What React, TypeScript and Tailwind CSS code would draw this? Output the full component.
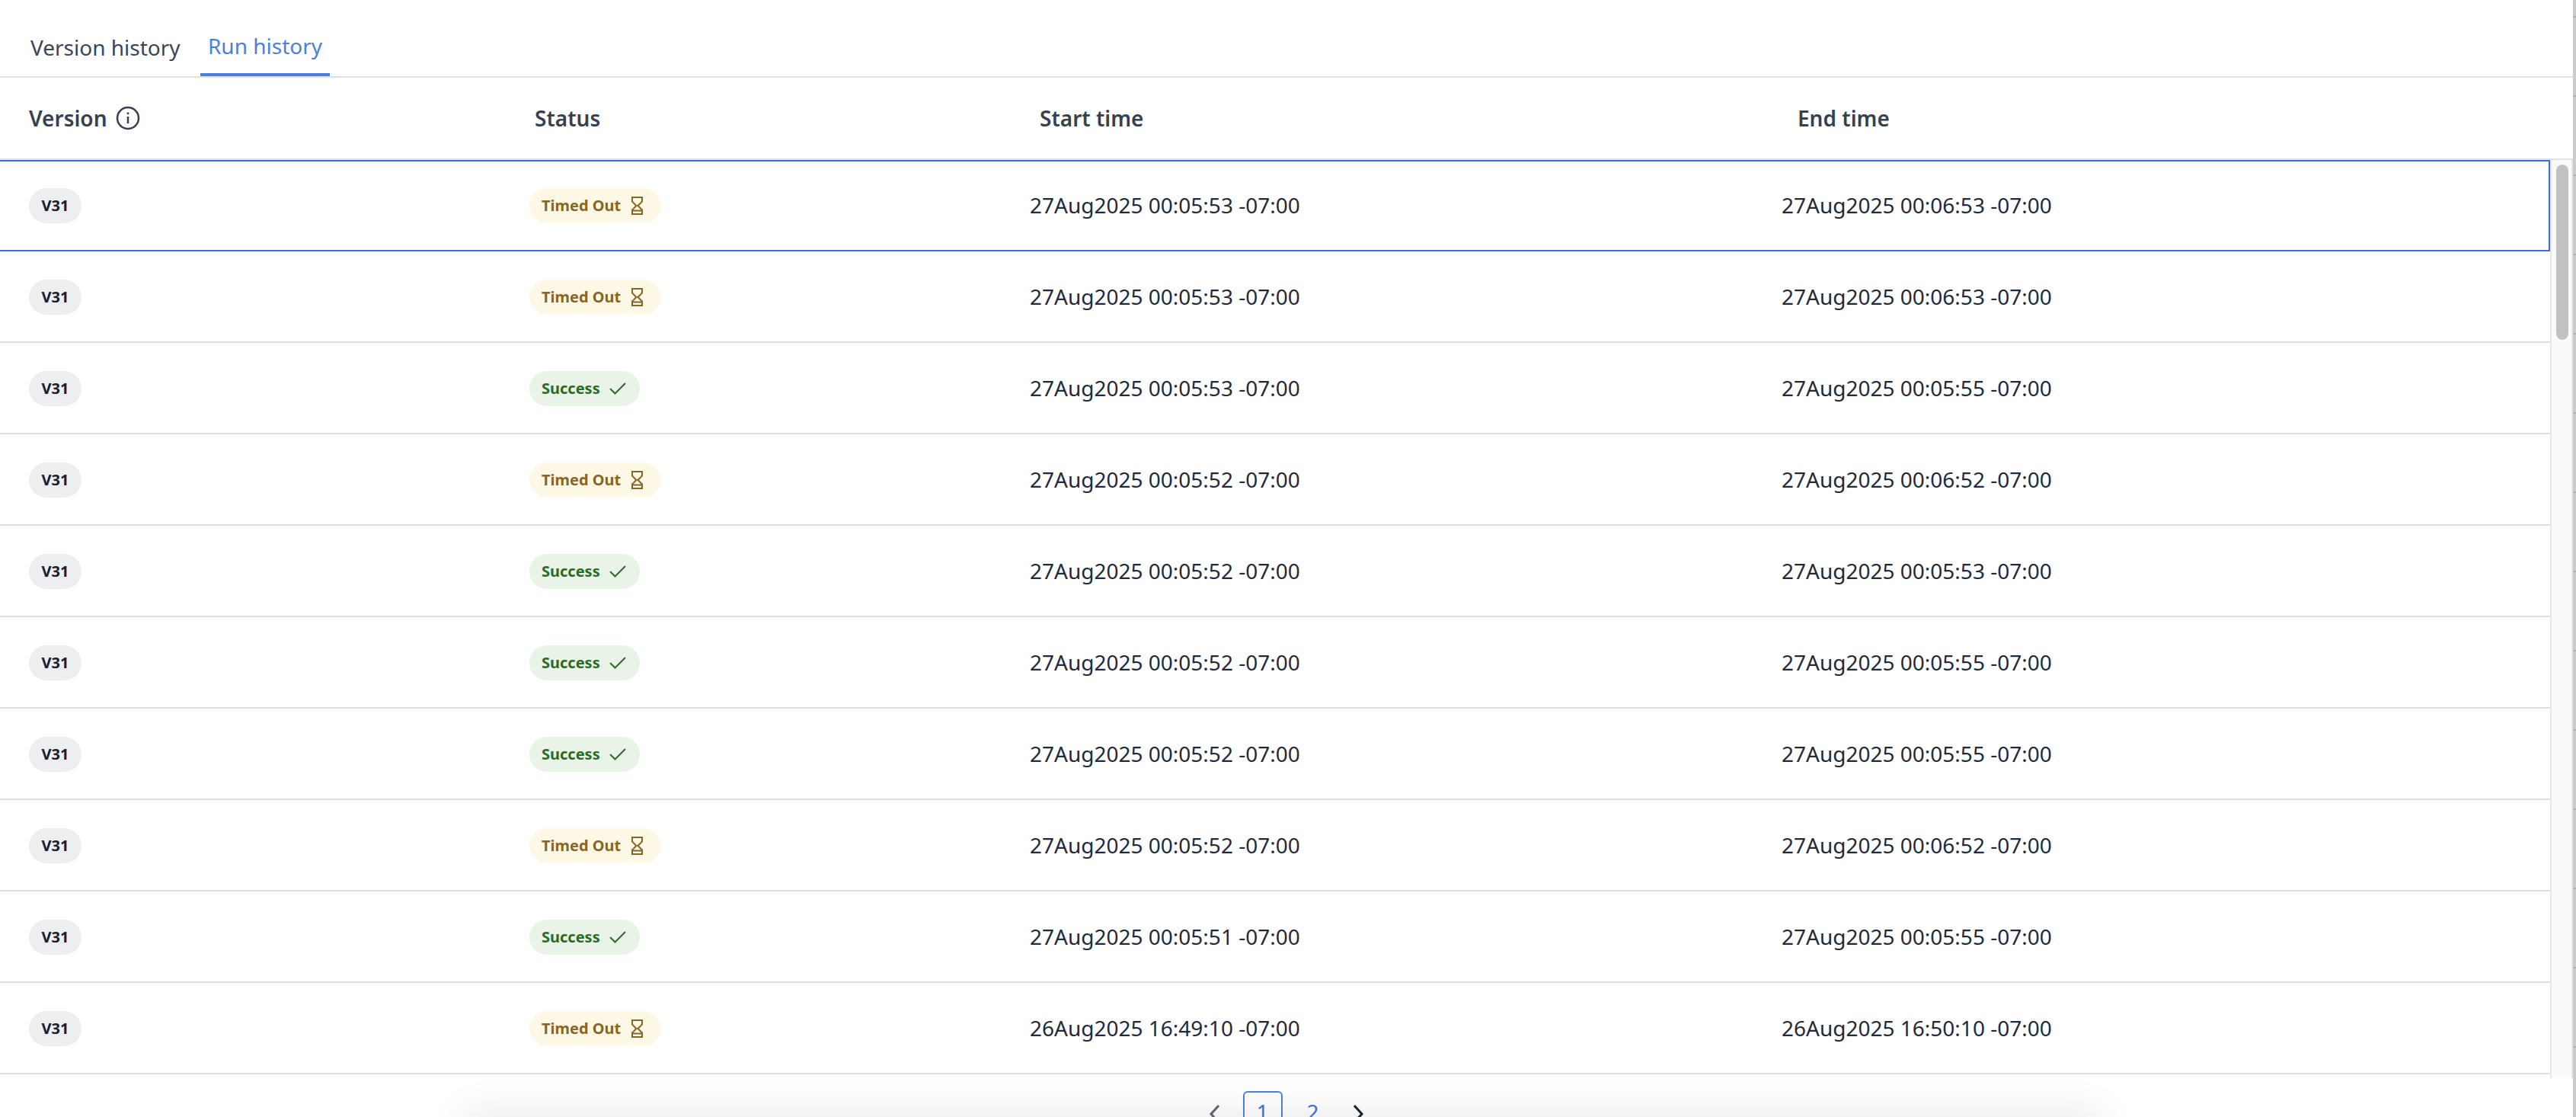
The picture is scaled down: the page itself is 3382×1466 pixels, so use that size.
import React from "react";

const rows = [
  ["t", "27Aug2025 00:05:53 -07:00", "27Aug2025 00:06:53 -07:00"],
  ["t", "27Aug2025 00:05:53 -07:00", "27Aug2025 00:06:53 -07:00"],
  ["s", "27Aug2025 00:05:53 -07:00", "27Aug2025 00:05:55 -07:00"],
  ["t", "27Aug2025 00:05:52 -07:00", "27Aug2025 00:06:52 -07:00"],
  ["s", "27Aug2025 00:05:52 -07:00", "27Aug2025 00:05:53 -07:00"],
  ["s", "27Aug2025 00:05:52 -07:00", "27Aug2025 00:05:55 -07:00"],
  ["s", "27Aug2025 00:05:52 -07:00", "27Aug2025 00:05:55 -07:00"],
  ["t", "27Aug2025 00:05:52 -07:00", "27Aug2025 00:06:52 -07:00"],
  ["s", "27Aug2025 00:05:51 -07:00", "27Aug2025 00:05:55 -07:00"],
  ["t", "26Aug2025 16:49:10 -07:00", "26Aug2025 16:50:10 -07:00"],
];

function Hourglass() {
  return (
    <svg width="15" height="24" viewBox="0 0 15 24" fill="none" stroke="#8a6520" strokeWidth="2">
      <path d="M1 1H14V6.5L8.5 12L14 17.5V23H1V17.5L6.5 12L1 6.5Z" />
      <path d="M1 18.5H14" />
    </svg>
  );
}

function Check() {
  return (
    <svg width="22" height="16" viewBox="0 0 22 16" fill="none" stroke="#2c6b26" strokeWidth="2">
      <path d="M1 8L7.5 14.5L21 1" />
    </svg>
  );
}

function Badge({ kind }: { kind: string }) {
  if (kind === "t") {
    return (
      <span className="inline-flex h-[46px] w-[173px] items-center gap-[14px] rounded-full bg-[#fef9e6] pl-[16px] text-[20px] leading-none font-bold text-[#8a6520]">
        Timed Out
        <Hourglass />
      </span>
    );
  }
  return (
    <span className="inline-flex h-[46px] w-[145px] items-center gap-[12px] rounded-full bg-[#e9f3e8] pl-[16px] text-[20px] leading-none font-bold text-[#2c6b26]">
      Success
      <Check />
    </span>
  );
}

export default function App() {
  return (
    <div className="flex h-[1466px] w-[3382px] overflow-hidden bg-white font-['Noto_Sans',sans-serif] text-[28px] text-[#1f2a3d]">
      <div className="flex min-w-0 flex-1 flex-col">
        <div className="flex h-[102px] shrink-0 items-end border-b-2 border-[#e0e0e0]">
          <div className="ml-[40px] flex h-[76px] w-[196px] items-center whitespace-nowrap text-[#3a4558]">
            Version history
          </div>
          <div className="ml-[27px] flex h-[76px] w-[170px] items-center justify-center border-b-4 border-[#4a7fe0] whitespace-nowrap text-[#4a7fe0]">
            Run history
          </div>
        </div>

        <div className="grid h-[106px] shrink-0 grid-cols-[702px_663px_995px_1fr] items-center font-semibold text-[#36404f]">
          <div className="flex items-center gap-[11px] pl-[38px]">
            Version
            <svg width="32" height="32" viewBox="0 0 32 32" fill="none" stroke="#36404f" strokeWidth="2.5">
              <circle cx="16" cy="16" r="14" />
              <path d="M16 14V23" />
              <path d="M16 8.5V11" />
            </svg>
          </div>
          <div>Status</div>
          <div>Start time</div>
          <div>End time</div>
        </div>

        <div className="flex min-h-0 flex-1 border-t-2 border-[#e0e0e0]">
          <div className="min-w-0 flex-1 overflow-hidden">
            {rows.map((r, i) => (
              <div
                key={i}
                className={
                  i === 0
                    ? "grid h-[120px] grid-cols-[695px_657px_987px_1fr] items-center border-2 border-l-0 border-[#3a6fdc] pb-[2px]"
                    : "grid h-[120px] grid-cols-[695px_657px_987px_1fr] items-center border-b-2 border-[#e0e0e0]"
                }
              >
                <div className="pl-[38px]">
                  <span className="inline-flex h-[46px] w-[69px] items-center justify-center rounded-full bg-[#eceef0] text-[20px] leading-none font-bold text-[#162032]">
                    V31
                  </span>
                </div>
                <div>
                  <Badge kind={r[0]} />
                </div>
                <div className="whitespace-nowrap">{r[1]}</div>
                <div className="whitespace-nowrap">{r[2]}</div>
              </div>
            ))}
          </div>
          <div className="w-[30px] shrink-0 border-x-2 border-[#e6e6e6] bg-[#fafafa] pt-[6px] pl-[6px]">
            <div className="h-[230px] w-[16px] rounded-full bg-[#c1c1c1]" />
          </div>
        </div>

        <div className="relative h-[51px] shrink-0 overflow-hidden bg-white pt-[17px] text-[#3a6fdc]">
          <div className="absolute top-[64px] right-[640px] left-[630px] h-[40px] shadow-[0_0_56px_16px_rgba(0,0,0,0.1)]" />
          <div className="relative flex items-start justify-center">
            <svg width="20" height="30" viewBox="0 0 20 30" fill="none" stroke="#5c6270" strokeWidth="3" className="mt-[16px]">
              <path d="M15 3L5 14L15 25" />
            </svg>
            <div className="ml-[27px] flex h-[60px] w-[52px] justify-center rounded-[6px] border-2 border-[#4a7fe0] pt-[4px]">1</div>
            <div className="flex h-[60px] w-[80px] justify-center pt-[6px]">2</div>
            <svg width="20" height="30" viewBox="0 0 20 30" fill="none" stroke="#162032" strokeWidth="3" className="mt-[16px] ml-[10px]">
              <path d="M4 3L14 14L4 25" />
            </svg>
          </div>
        </div>
      </div>
      <div className="w-[4px] shrink-0 bg-[repeating-linear-gradient(to_bottom,#cbcbcb_0,#cbcbcb_21px,#b2b2b2_21px,#b2b2b2_23px,#cbcbcb_23px,#cbcbcb_104px)]" />
    </div>
  );
}
